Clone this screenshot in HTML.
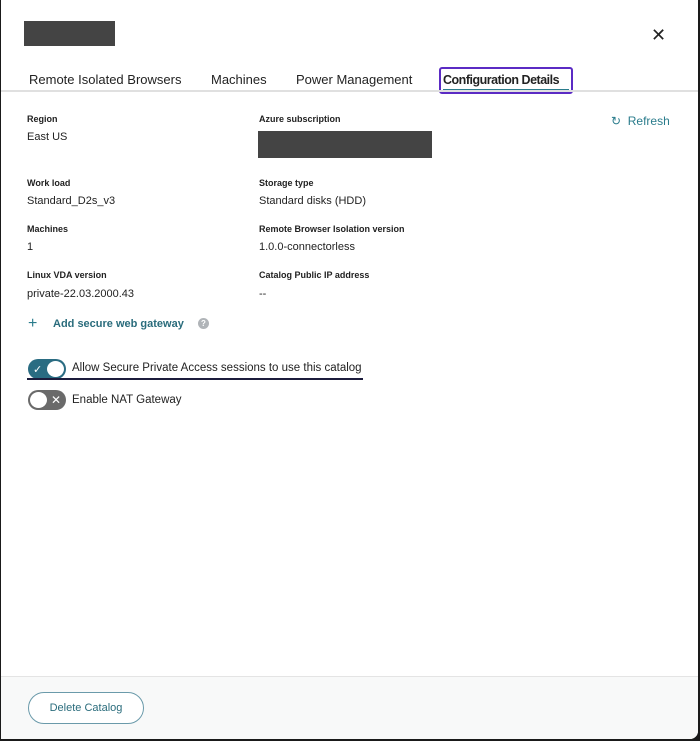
<!DOCTYPE html>
<html><head><style>
*{margin:0;padding:0;box-sizing:border-box}
body{width:700px;height:741px;background:#1a1a1a;font-family:"Liberation Sans",sans-serif;color:#222;position:relative;overflow:hidden}
.panel{position:absolute;left:1px;top:0;width:697px;height:739px;background:#fff;border-radius:0 0 8px 0;overflow:hidden}
.abs{position:absolute;white-space:nowrap}
.lbl{font-size:9px;font-weight:bold;color:#222}
.val{font-size:11px;color:#222}
.tab{font-size:13px;color:#222;top:72px}
.red{background:#444}
</style></head><body>
<div class="panel">
<div class="abs red" style="left:23px;top:21px;width:91px;height:25px"></div>
<div class="abs" style="left:650px;top:25px;font-size:18px;color:#222">✕</div>
<div class="abs tab" style="left:28px">Remote Isolated Browsers</div>
<div class="abs tab" style="left:210px">Machines</div>
<div class="abs tab" style="left:295px">Power Management</div>
<div class="abs" style="left:438px;top:67px;width:134px;height:27px;border:2px solid #5b2bc4;border-radius:3px"></div>
<div class="abs" style="left:442px;top:89px;width:126px;height:2px;background:#2a7c8c"></div>
<div class="abs tab" style="left:442px;font-weight:bold;letter-spacing:-0.5px;transform:scaleX(0.96);transform-origin:left">Configuration Details</div>
<div class="abs" style="left:0;top:90px;width:697px;height:2px;background:#e0e0e0"></div>

<div class="abs lbl" style="left:26px;top:114px">Region</div>
<div class="abs val" style="left:26px;top:131px">East US</div>
<div class="abs lbl" style="left:258px;top:114px">Azure subscription</div>
<div class="abs red" style="left:257px;top:131px;width:174px;height:27px"></div>
<div class="abs" style="left:610px;top:114px;font-size:12px;color:#2a7c8c">↻&nbsp; Refresh</div>

<div class="abs lbl" style="left:26px;top:178px">Work load</div>
<div class="abs val" style="left:26px;top:195px">Standard_D2s_v3</div>
<div class="abs lbl" style="left:258px;top:178px">Storage type</div>
<div class="abs val" style="left:258px;top:195px">Standard disks (HDD)</div>

<div class="abs lbl" style="left:26px;top:224px">Machines</div>
<div class="abs val" style="left:26px;top:241px">1</div>
<div class="abs lbl" style="left:258px;top:224px">Remote Browser Isolation version</div>
<div class="abs val" style="left:258px;top:241px">1.0.0-connectorless</div>

<div class="abs lbl" style="left:26px;top:270px">Linux VDA version</div>
<div class="abs val" style="left:26px;top:288px">private-22.03.2000.43</div>
<div class="abs lbl" style="left:258px;top:270px">Catalog Public IP address</div>
<div class="abs val" style="left:258px;top:288px">--</div>

<div class="abs" style="left:27px;top:315px;font-size:16px;color:#2a7c8c">+</div>
<div class="abs" style="left:52px;top:318px;font-size:11px;font-weight:bold;color:#2a6c7c">Add secure web gateway</div>
<div class="abs" style="left:197px;top:318px;width:11px;height:11px;border-radius:50%;background:#b0b4b8;color:#fff;font-size:8px;font-weight:bold;text-align:center;line-height:11px">?</div>

<div class="abs" style="left:27px;top:359px;width:38px;height:20px;border-radius:10px;background:#2a6c82"></div>
<div class="abs" style="left:46px;top:361px;width:17px;height:16px;border-radius:50%;background:#fff"></div>
<div class="abs" style="left:32px;top:363px;font-size:11px;color:#fff">✓</div>
<div class="abs" style="left:71px;top:362px;font-size:11.5px;color:#222">Allow Secure Private Access sessions to use this catalog</div>
<div class="abs" style="left:26px;top:378px;width:336px;height:2px;background:#1c1c3c"></div>

<div class="abs" style="left:27px;top:390px;width:38px;height:20px;border-radius:10px;background:#6a6a6a"></div>
<div class="abs" style="left:29px;top:392px;width:17px;height:16px;border-radius:50%;background:#fff"></div>
<div class="abs" style="left:50px;top:393px;font-size:12px;color:#fff">✕</div>
<div class="abs" style="left:71px;top:394px;font-size:11.5px;color:#222">Enable NAT Gateway</div>

<div class="abs" style="left:0;top:676px;width:697px;height:63px;background:#f8f9f9;border-top:1px solid #e4e4e4"></div>
<div class="abs" style="left:27px;top:692px;width:116px;height:32px;border:1.5px solid #6a9aaa;border-radius:16px;background:#fff;font-size:11px;color:#2a6c7c;text-align:center;line-height:30px">Delete Catalog</div>
</div>
</body></html>
